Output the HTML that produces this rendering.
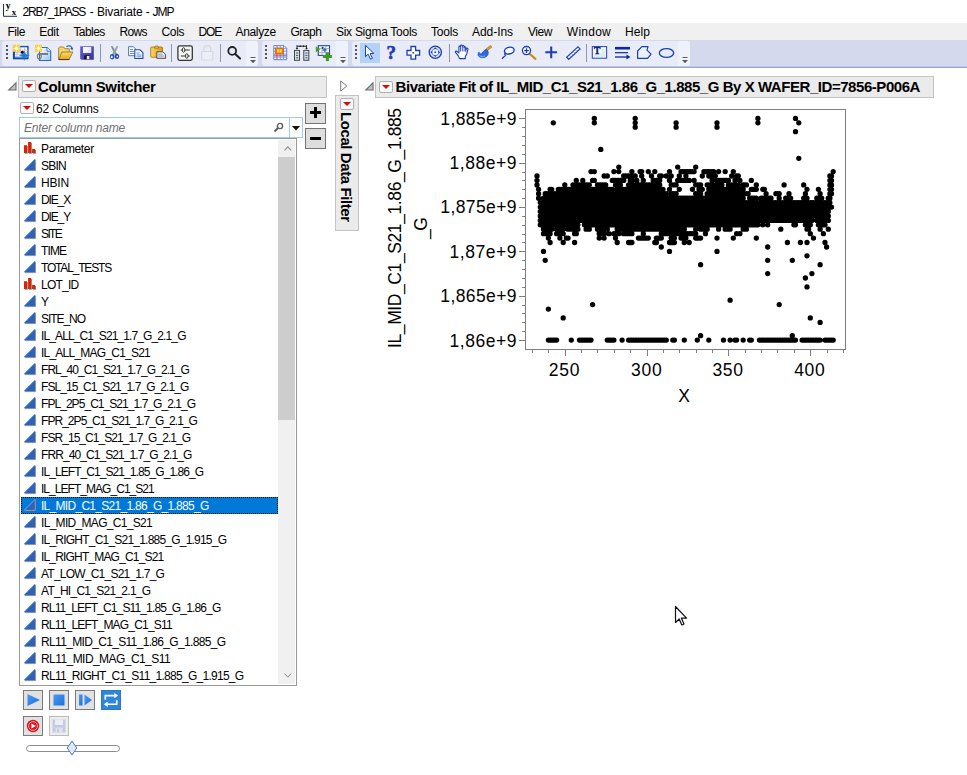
<!DOCTYPE html>
<html><head><meta charset="utf-8"><title>2RB7_1PASS - Bivariate - JMP</title>
<style>
html,body{margin:0;padding:0;background:#fff;}
body{width:967px;height:775px;position:relative;overflow:hidden;font-family:'Liberation Sans',sans-serif;color:#000;}
.t{position:absolute;white-space:pre;line-height:1;transform:translateY(-50%);}
.a{position:absolute;}
svg{position:absolute;overflow:visible;}
.hdr{position:absolute;background:#ebebeb;border:1px solid #c3c3c3;box-sizing:border-box;}
.rt{position:absolute;box-sizing:border-box;width:13.5px;height:12px;border:1px solid #b0b0b0;border-radius:2px;background:#fbfbfb;}
.rt:after{content:"";position:absolute;left:1.7px;top:3.4px;border-left:4px solid transparent;border-right:4px solid transparent;border-top:4.3px solid #d00c0c;}
.btn{position:absolute;box-sizing:border-box;width:21px;height:21px;border:1px solid #747474;background:#dedede;}
.grp{position:absolute;top:41px;height:24.5px;background:#e9ecf7;border-radius:3px;}
.sep{position:absolute;top:44px;width:1px;height:18px;background:#8e94b0;}
.grip i{position:absolute;left:0;width:2px;height:2px;background:#555;}
</style></head><body>

<div class="a" style="left:0;top:0;width:967px;height:23px;background:#fff"></div>
<svg style="left:2px;top:2px" width="16" height="16" viewBox="0 0 16 16"><path d="M1.5 2v12.3H15" fill="none" stroke="#1b2f6b" stroke-width="1"/>
<text x="3.8" y="7.400" font-family="Liberation Serif, serif" font-weight="bold" font-size="9.5" fill="#000">y</text>
<text x="9.800" y="12.800" font-family="Liberation Serif, serif" font-weight="bold" font-size="9" fill="#000">x</text></svg>
<span class="t" style="left:22.6px;top:11.5px;font-size:12px;letter-spacing:-1.190px;">2RB7_1PASS</span>
<span class="t" style="left:89.8px;top:11.5px;font-size:12px;letter-spacing:-0.112px;">- Bivariate -</span>
<span class="t" style="left:152.6px;top:11.5px;font-size:12px;letter-spacing:-1.033px;">JMP</span>
<div class="a" style="left:0;top:23px;width:967px;height:17px;background:#f0f0f0"></div>
<span class="t" style="left:7.5px;top:31.5px;font-size:12px;letter-spacing:-0.486px;">File</span>
<span class="t" style="left:39.2px;top:31.5px;font-size:12px;letter-spacing:-0.297px;">Edit</span>
<span class="t" style="left:73.4px;top:31.5px;font-size:12px;letter-spacing:-0.548px;">Tables</span>
<span class="t" style="left:119.5px;top:31.5px;font-size:12px;letter-spacing:-0.679px;">Rows</span>
<span class="t" style="left:161.4px;top:31.5px;font-size:12px;letter-spacing:-0.279px;">Cols</span>
<span class="t" style="left:198.6px;top:31.5px;font-size:12px;letter-spacing:-1.139px;">DOE</span>
<span class="t" style="left:235.5px;top:31.5px;font-size:12px;letter-spacing:-0.343px;">Analyze</span>
<span class="t" style="left:290.4px;top:31.5px;font-size:12px;letter-spacing:-0.452px;">Graph</span>
<span class="t" style="left:336.0px;top:31.5px;font-size:12px;letter-spacing:-0.277px;">Six Sigma Tools</span>
<span class="t" style="left:431.0px;top:31.5px;font-size:12px;letter-spacing:-0.203px;">Tools</span>
<span class="t" style="left:472.0px;top:31.5px;font-size:12px;letter-spacing:-0.051px;">Add-Ins</span>
<span class="t" style="left:528.0px;top:31.5px;font-size:12px;letter-spacing:-0.449px;">View</span>
<span class="t" style="left:566.8px;top:31.5px;font-size:12px;letter-spacing:0.252px;">Window</span>
<span class="t" style="left:625.0px;top:31.5px;font-size:12px;letter-spacing:0.078px;">Help</span>
<div class="a" style="left:0;top:40px;width:967px;height:28px;background:#d4d9ee;border-bottom:1px solid #9ba7d2;box-sizing:border-box"></div>
<div class="a" style="left:0;top:66px;width:967px;height:1px;background:#c0c8e6"></div>
<div class="grp" style="left:2px;width:256px"></div>
<div class="a" style="left:246px;top:41px;width:12px;height:24.5px;background:#eef2fb;border-radius:0 3px 3px 0"></div>
<svg style="left:249.7px;top:57px" width="6" height="7" viewBox="0 0 6 7"><path d="M0.500 0.500h5" stroke="#5a5a5a" stroke-width="1"/><path d="M0 3.100h6L3 6.200z" fill="#5a5a5a"/><path d="M1 1.500h5M3.500 6.700l3-3.300" stroke="#fff" stroke-width="0.700" fill="none" opacity="0.800"/></svg>
<div class="grp" style="left:262px;width:86px"></div>
<div class="a" style="left:336px;top:41px;width:12px;height:24.5px;background:#eef2fb;border-radius:0 3px 3px 0"></div>
<svg style="left:339.7px;top:57px" width="6" height="7" viewBox="0 0 6 7"><path d="M0.500 0.500h5" stroke="#5a5a5a" stroke-width="1"/><path d="M0 3.100h6L3 6.200z" fill="#5a5a5a"/><path d="M1 1.500h5M3.500 6.700l3-3.300" stroke="#fff" stroke-width="0.700" fill="none" opacity="0.800"/></svg>
<div class="grp" style="left:352px;width:338px"></div>
<div class="a" style="left:678px;top:41px;width:12px;height:24.5px;background:#eef2fb;border-radius:0 3px 3px 0"></div>
<svg style="left:681.7px;top:57px" width="6" height="7" viewBox="0 0 6 7"><path d="M0.500 0.500h5" stroke="#5a5a5a" stroke-width="1"/><path d="M0 3.100h6L3 6.200z" fill="#5a5a5a"/><path d="M1 1.500h5M3.500 6.700l3-3.300" stroke="#fff" stroke-width="0.700" fill="none" opacity="0.800"/></svg>
<div class="a grip" style="left:6px;top:45px"><i style="top:0px"></i><i style="top:4px"></i><i style="top:8px"></i><i style="top:12px"></i></div>
<div class="a grip" style="left:265px;top:45px"><i style="top:0px"></i><i style="top:4px"></i><i style="top:8px"></i><i style="top:12px"></i></div>
<div class="a grip" style="left:355px;top:45px"><i style="top:0px"></i><i style="top:4px"></i><i style="top:8px"></i><i style="top:12px"></i></div>
<div class="sep" style="left:100px"></div>
<div class="sep" style="left:171px"></div>
<div class="sep" style="left:220px"></div>
<div class="sep" style="left:449px"></div>
<div class="sep" style="left:586px"></div>
<svg style="left:0;top:40px" width="700" height="27" viewBox="0 40 700 27">
<defs>
<linearGradient id="gpg" x1="0" y1="0" x2="1" y2="1"><stop offset="0" stop-color="#ffffff"/><stop offset="1" stop-color="#9cc4ee"/></linearGradient>
<linearGradient id="gfo" x1="0" y1="0" x2="0" y2="1"><stop offset="0" stop-color="#fbdc6a"/><stop offset="1" stop-color="#e9a41c"/></linearGradient>
<linearGradient id="gfl" x1="0" y1="0" x2="1" y2="1"><stop offset="0" stop-color="#6a62d6"/><stop offset="1" stop-color="#35309a"/></linearGradient>
<linearGradient id="gcl" x1="0" y1="0" x2="1" y2="0"><stop offset="0" stop-color="#f8d860"/><stop offset="1" stop-color="#e09a10"/></linearGradient>
</defs>
<!-- 1 new data table -->
<rect x="13.6" y="46.6" width="14.3" height="11.8" fill="#fff" stroke="#0d4ea6" stroke-width="1.4"/>
<path d="M13.6 50.2h14.3M13.6 54.3h14.3" stroke="#f0a0aa" stroke-width="0.7"/>
<path d="M17 46.6v11.8M20.700 46.6v11.8M24.4 46.6v11.8M13.6 52.3h14.3M13.6 56.4h14.3" stroke="#8fb0e6" stroke-width="0.7"/>
<path d="M14 47v11.400h14" stroke="#0d4ea6" stroke-width="1.9" fill="none"/>
<g transform="translate(13 44.8)"><rect x="0" y="0" width="7" height="7" fill="#f5c929"/><path d="M3.5 0v7M0 3.5h7M0.8 0.8l5.4 5.4M6.2 0.8L0.8 6.2" stroke="#fff4b8" stroke-width="0.9"/><circle cx="3.5" cy="3.5" r="1.3" fill="#fff"/></g>
<circle cx="22.4" cy="52.3" r="1.5" fill="#000"/>
<path d="M24.300 51c.5 2.5 1.5 3.500 5.100 4.400c-3.600.9-4.600 1.900-5.100 5.100c-.5-3.200-1.500-4.200-4.900-5.100c3.400-.9 4.400-1.900 4.900-4.400z" fill="#1b7ed2" stroke="#1b7ed2" stroke-width="0.35" stroke-linejoin="round"/>
<!-- 2 new script -->
<path d="M39.5 47.500h7.500l3.7 3.700v9.300h-11.200z" fill="url(#gpg)" stroke="#2c6db8" stroke-width="1.1"/>
<path d="M47 47.500v3.700h3.7" fill="#fff" stroke="#2c6db8" stroke-width="0.9"/>
<g transform="translate(35 44.8)"><rect x="0" y="0" width="7" height="7" fill="#f5c929"/><path d="M3.5 0v7M0 3.5h7M0.8 0.8l5.4 5.4M6.2 0.8L0.8 6.2" stroke="#fff4b8" stroke-width="0.9"/><circle cx="3.5" cy="3.5" r="1.3" fill="#fff"/></g>
<path d="M38.5 54h9.5" stroke="#6a6a6a" stroke-width="1.7"/>
<ellipse cx="39.3" cy="56.4" rx="1.9" ry="2.5" fill="none" stroke="#7c7c7c" stroke-width="1.2"/>
<!-- 3 open -->
<path d="M58.6 59.200v-11.300l1-.9h4l1.3 1.700h4.300v10.500z" fill="#f3d772" stroke="#9a7d2c" stroke-width="0.9"/>
<path d="M61.8 52h11l-3.6 7.500h-10.400z" fill="url(#gfo)" stroke="#8a6a1a" stroke-width="0.8"/>
<path d="M58.6 59.600h10.6" stroke="#4a3a12" stroke-width="1"/>
<path d="M66.4 46.800c2-1.7 4.6-1.2 5.5 1.2" fill="none" stroke="#3c6ea8" stroke-width="1.3"/>
<path d="M70.2 48l3-0.3-1 2.800z" fill="#2c5a96"/>
<!-- 4 save -->
<path d="M80.2 46.200h13.600v13.500h-12.400l-1.2-1.200z" fill="url(#gfl)"/>
<rect x="83" y="47" width="8.2" height="6" fill="#f2f4fb"/>
<path d="M91.2 47v6l-5-0z" fill="#d6dcf0" opacity="0.6"/>
<rect x="84" y="55.3" width="6" height="3.9" fill="#1a1a1a"/>
<rect x="86.8" y="56" width="2.6" height="3.2" fill="#e8e8f0"/>
<!-- 5 cut -->
<path d="M110.800 46.200l1.700-.2 4.900 8.800-1.900 1.400z" fill="#858b95"/>
<path d="M118.300 46.200l-1.700-.2-4.900 8.800 1.900 1.400z" fill="#9aa0a9"/>
<ellipse cx="112.200" cy="56.800" rx="2.300" ry="2.700" fill="#2a55c4"/>
<ellipse cx="117" cy="56.400" rx="2.200" ry="2.600" fill="#2347ae"/>
<ellipse cx="111.800" cy="57" rx="0.900" ry="1.200" fill="#fff"/>
<ellipse cx="117.300" cy="56.500" rx="0.800" ry="1.100" fill="#e8eefc"/>
<!-- 6 copy -->
<path d="M128.6 46.700h4.800l2.4 2.400v6.600h-7.200z" fill="#fff" stroke="#3a66b8" stroke-width="0.9"/>
<path d="M130 49.500h3M130 51.500h4M130 53.500h4" stroke="#4a80d8" stroke-width="0.9"/>
<path d="M134.8 49.800h5.200l2.9 2.900v5.800h-8.100z" fill="#fff" stroke="#1d4aa6" stroke-width="1.1"/>
<path d="M136.5 53h3M136.5 55h5M136.5 56.800h5" stroke="#4a80d8" stroke-width="0.9"/>
<!-- 7 paste -->
<rect x="150.7" y="47" width="11.8" height="10.3" rx="1" fill="url(#gcl)" stroke="#9a6c10" stroke-width="0.8"/>
<path d="M154.5 48.200l1-2.300h2.400l1 2.300z" fill="#f0c040" stroke="#8a6a1a" stroke-width="0.7"/>
<path d="M156.8 51.800h6l2.8 2.600v3.900h-8.800z" fill="#dfe6f2" stroke="#4a3a2a" stroke-width="0.9"/>
<path d="M158.3 54.300h3.500M158.3 56h5.5" stroke="#7a8aa8" stroke-width="0.8"/>
<!-- 8 sliders box -->
<rect x="177.9" y="45.9" width="14.4" height="14.4" rx="1.7" fill="#f6f6f6" stroke="#333" stroke-width="1.3"/>
<path d="M180.8 50h9M180.8 56h9" stroke="#333" stroke-width="1.1"/>
<ellipse cx="183.6" cy="50" rx="1.3" ry="2.3" fill="#f6f6f6" stroke="#333" stroke-width="1"/>
<ellipse cx="186.8" cy="56" rx="1.3" ry="2.3" fill="#f6f6f6" stroke="#333" stroke-width="1"/>
<!-- 9 lock disabled -->
<path d="M203.8 51.500v-2.600c0-4.4 7-4.4 7 0v2.6" fill="none" stroke="#d3d7e4" stroke-width="1.3"/>
<rect x="201.7" y="51.5" width="11.2" height="8.5" rx="0.8" fill="#eceff8" stroke="#d3d7e4" stroke-width="1.2"/>
<!-- 10 search -->
<circle cx="232.2" cy="50.9" r="3.9" fill="none" stroke="#222" stroke-width="1.8"/>
<path d="M235 53.800l5 4.8" stroke="#222" stroke-width="2.1" stroke-linecap="round"/>
<!-- 11 table orange -->
<path d="M273.8 45.600h10.200l2.7 2.700v11.400h-12.900z" fill="#fff" stroke="#4a78d8" stroke-width="0.9"/>
<path d="M273.8 48.300h12.900M273.8 51.200h12.900M273.8 54.100h12.900M273.8 57h12.900M280.2 45.600v14.100M283.4 45.600v14.1" stroke="#5a88e0" stroke-width="0.9"/>
<path d="M277 45.600v14.1" stroke="#e03030" stroke-width="0.9"/>
<path d="M273.8 55.600h12.9" stroke="#e03030" stroke-width="0.7"/>
<rect x="275.3" y="48" width="8" height="5.8" fill="#f07c12" stroke="#d05a08" stroke-width="0.6"/>
<rect x="277" y="49.3" width="4.7" height="3.2" fill="#fbe24a"/>
<path d="M279.3 49.300v3.2" stroke="#f07c12" stroke-width="0.7"/>
<!-- 12 columns -->
<rect x="294.5" y="50.4" width="5" height="9.9" fill="#cfe4f6" stroke="#444" stroke-width="1"/>
<rect x="303.8" y="50.4" width="5" height="9.9" fill="#cfe4f6" stroke="#444" stroke-width="1"/>
<path d="M296 53h2.200M296 55.400h2.200M296 57.800h2.200M305.3 53h2.200M305.3 55.400h2.200M305.3 57.800h2.2" stroke="#444" stroke-width="0.9"/>
<path d="M297 46.200h9.500M297 45.200v3.400M306.5 45.200v3.4" stroke="#111" stroke-width="0.9" fill="none"/>
<path d="M295.7 48l1.3 1.4 1.3-1.400zM305.2 48l1.3 1.4 1.3-1.400z" fill="#111"/>
<path d="M299 46.200l1.6-1.100v2.200zM304.5 46.200l-1.6-1.100v2.200z" fill="#111"/>
<!-- 13 table green plus -->
<rect x="318.3" y="45.7" width="11.2" height="9.7" fill="#fff" stroke="#0d4ea6" stroke-width="1.1"/>
<path d="M318.3 48.600h11.200M318.3 52.600h11.2" stroke="#e56a7a" stroke-width="0.7"/>
<path d="M322 45.700v9.700M325.7 45.700v9.7" stroke="#7a9ad8" stroke-width="0.7"/>
<path d="M324.7 47.200c.2 1.7.7 2.2 3.2 2.700c-2.5.5-3 1-3.2 3.200c-.2-2.2-.8-2.7-3.1-3.200c2.3-.5 2.9-1 3.1-2.700z" fill="#1b7ed2"/>
<circle cx="322.7" cy="47.8" r="0.9" fill="#111"/>
<path d="M315.8 46.200l4.5 3.2-4.5 3.200z" fill="#3fa228"/>
<path d="M325.9 52.200h3v2.900h3v3h-3v2.800h-3v-2.800h-3v-3h3z" fill="#3c9a1c"/>
<!-- 14 arrow selected -->
<rect x="360" y="43" width="20" height="20" fill="#b3d2f8"/>
<path d="M365.5 45.300v11.400l2.7-2.5 2.3 5 1.9-.9-2.3-4.800h3.800z" fill="#fff" stroke="#1a44b0" stroke-width="1" stroke-linejoin="round"/>
<!-- 15 ? -->
<text x="386.4" y="58.8" font-family="Liberation Serif, serif" font-weight="bold" font-size="19" fill="#1c3fae" stroke="#1c3fae" stroke-width="0.6">?</text>
<!-- 16 cross -->
<path d="M411 46.500h4.600v4h4v4.600h-4v4h-4.600v-4h-4v-4.600h4z" fill="#fff" stroke="#1c3fae" stroke-width="1.3"/>
<rect x="412.5" y="52" width="1.6" height="1.6" fill="#1c3fae"/>
<!-- 17 target -->
<circle cx="435.3" cy="52.2" r="6.1" fill="#d6e6fa" stroke="#1c3fae" stroke-width="1.3"/>
<circle cx="435.3" cy="52.2" r="3.5" fill="#eef5ff" stroke="#5a7ad0" stroke-width="0.8"/>
<path d="M435.3 47.300l1.5 1.800h-3zM435.3 57.100l1.5-1.800h-3zM430.4 52.200l1.8-1.500v3zM440.2 52.200l-1.8-1.500v3z" fill="#1c3fae"/>
<rect x="434.5" y="51.4" width="1.6" height="1.6" fill="#1c3fae"/>
<!-- 18 hand -->
<path d="M459.5 58.600l-1.3-3-2.7-3.200c-.5-.9.5-1.7 1.4-1.100l2 1.700v-6.200c0-1 1.5-1 1.6 0v-1c0-1.1 1.7-1.1 1.8 0v.5c0-1 1.7-1 1.8 0v1.200c0-1 1.6-1 1.7 0v2.600l.6-1.500c.5-.9 1.9-.5 1.6.6l-1.3 4.8-1.4 2.600v2z" fill="#fff" stroke="#1c3fae" stroke-width="1.1" stroke-linejoin="round"/>
<path d="M460.5 47v4.500M462.3 46v5.500M464.1 46.500v5M465.8 48v4" stroke="#1c3fae" stroke-width="0.8"/>
<!-- 19 brush -->
<path d="M485.5 49.200l5-3.8 1.4 1.7-5 3.900z" fill="#d89a1a" stroke="#8a5a0a" stroke-width="0.5"/>
<path d="M486.5 49.500c2.5 1.5 2.5 5.5-.5 7.300c-2.7 1.6-7 1.1-7.9-1.500c-.4-1.3.1-2.7 1-3.400c-.3 1.8 1.4 2.3 2.7 1.300c1.8-1.3 2.3-3.7 4.7-3.700z" fill="#2a6ae0" stroke="#1a3fa8" stroke-width="0.6"/>
<path d="M479.5 55.500c1.5 1.3 4 1.3 5.5 .3" stroke="#9cc0ff" stroke-width="0.9" fill="none"/>
<!-- 20 lasso -->
<ellipse cx="509.3" cy="50.6" rx="4.9" ry="3.3" transform="rotate(-15 509.3 50.6)" fill="#f4f8ff" stroke="#1c3fae" stroke-width="1.4"/>
<path d="M505.8 53c-1.7.5-1.5 2.2.2 2.200c-1 .5-2 1.5-4 3.6" fill="none" stroke="#1c3fae" stroke-width="1.3"/>
<!-- 21 zoom -->
<path d="M529.8 54l5.6 4.9" stroke="#c88a1a" stroke-width="2.2" stroke-linecap="round"/>
<circle cx="526.5" cy="50.6" r="4.1" fill="#f4f8ff" stroke="#1c3fae" stroke-width="1.3"/>
<path d="M524.2 50.600h4.600M526.5 48.300v4.6" stroke="#1c3fae" stroke-width="1.2"/>
<!-- 22 plus -->
<path d="M545.3 52.300h11.800M551.2 46.400v11.8" stroke="#1c3fb5" stroke-width="2.1"/>
<!-- 23 ruler -->
<path d="M566.7 57.200l11.3-10.3 2 2.1-11.3 10.300z" fill="#fff" stroke="#2448b0" stroke-width="1.25"/>
<path d="M569.7 55.500l.8.900M571.7 53.700l.8.900M573.7 51.900l.8.900M575.7 50.100l.8.9" stroke="#2a52b8" stroke-width="0.6"/>
<!-- 24 text box -->
<rect x="592.3" y="46.6" width="14.3" height="11.6" fill="#fff" stroke="#2a52b8" stroke-width="1.1"/>
<path d="M601.5 50h4M601.5 52h4M594 54h11.500M594 56h11.5" stroke="#b8cdee" stroke-width="0.8"/>
<text x="594" y="54.2" font-family="Liberation Serif, serif" font-weight="bold" font-size="9.5" fill="#0a1f7a" stroke="#0a1f7a" stroke-width="0.4">T</text>
<!-- 25 lines arrow -->
<path d="M615 48.200h15" stroke="#0a2a9a" stroke-width="2.6"/>
<path d="M615 52.700h13" stroke="#0a2a9a" stroke-width="1.2"/>
<path d="M615 57h12" stroke="#0a2a9a" stroke-width="1.3"/>
<path d="M626.5 54.500l4 2.5-4 2.500z" fill="#0a2a9a"/>
<!-- 26 polygon -->
<path d="M637.6 58.300v-7.300l4.3-4.400h6.100l-1 3.5 4 4-3.4 4.200z" fill="#eaf1fc" stroke="#1c3fae" stroke-width="1.2" stroke-linejoin="round"/>
<!-- 27 ellipse -->
<ellipse cx="666.5" cy="53" rx="7.2" ry="4.4" fill="#e2edfb" stroke="#1c3fae" stroke-width="1.3"/>
</svg>

<svg style="left:8px;top:82px" width="9" height="9" viewBox="0 0 9 9"><path d="M8 0.8V8H0.8z" fill="#c4c4c4" stroke="#6a6a6a" stroke-width="1.1"/></svg>
<div class="hdr" style="left:18px;top:76px;width:309px;height:22px"></div>
<div class="rt" style="left:22px;top:80px"></div>
<span class="t" style="left:38.0px;top:86.0px;font-size:15px;font-weight:bold;letter-spacing:-0.334px;">Column Switcher</span>
<div class="rt" style="left:20.3px;top:102px"></div>
<span class="t" style="left:36.0px;top:108.5px;font-size:12px;letter-spacing:-0.153px;">62 Columns</span>
<div class="a" style="left:19px;top:117px;width:284px;height:21px;box-sizing:border-box;border:1px solid #9ccbee;background:#fff"></div>
<div class="a" style="left:289px;top:118px;width:1px;height:19px;background:#9ccbee"></div>
<span class="t" style="left:24.0px;top:127.5px;font-size:12px;font-style:italic;letter-spacing:-0.180px;color:#707070">Enter column name</span>
<svg style="left:273px;top:122px" width="11" height="11" viewBox="0 0 11 11"><circle cx="7" cy="4" r="2.600" fill="none" stroke="#5e5e5e" stroke-width="1.400"/><path d="M5 6L1.500 9.500" stroke="#5e5e5e" stroke-width="1.900"/></svg>
<svg style="left:292px;top:126px" width="8" height="5" viewBox="0 0 8 5"><path d="M0 0h8L4 4.5z" fill="#111"/></svg>
<div class="btn" style="left:305px;top:103px"></div><div class="a" style="left:310px;top:111px;width:11px;height:3px;background:#000"></div><div class="a" style="left:314px;top:107px;width:3px;height:11px;background:#000"></div>
<div class="btn" style="left:305px;top:128px"></div><div class="a" style="left:310px;top:137px;width:11px;height:3px;background:#000"></div>
<div class="a" style="left:19px;top:138px;width:278px;height:548px;box-sizing:border-box;border:1px solid #9a9a9a;background:#fff"></div>
<div class="a" style="left:278px;top:140px;width:17px;height:544px;background:#f0f0f0"></div>
<div class="a" style="left:278px;top:157px;width:17px;height:263px;background:#cdcdcd"></div>
<svg style="left:283.500px;top:146px" width="8" height="5" viewBox="0 0 8 5"><path d="M0.500 4.300L3.800 0.800 7.100 4.300" fill="none" stroke="#8f8f8f" stroke-width="1.150"/></svg>
<svg style="left:283.800px;top:673.300px" width="8" height="5" viewBox="0 0 8 5"><path d="M0.500 0.600L3.800 4.100 7.100 0.600" fill="none" stroke="#858585" stroke-width="1"/></svg>
<svg style="left:24px;top:142px" width="13" height="12" viewBox="0 0 13 12"><path d="M0.800 4h3v7.800h-3zM4.900 1h3v10.800h-3zM8.900 8h3.100v3.800h-3.100z" fill="#8c8c8c"/><path d="M0 3.200h3v7.800h-3zM4.100 0h3v11h-3zM8.100 7h3.100v4h-3.100z" fill="#dc2200"/></svg>
<span class="t" style="left:41.0px;top:148.5px;font-size:12px;letter-spacing:-0.359px;">Parameter</span>
<svg style="left:24px;top:158.9px" width="12" height="12" viewBox="0 0 12 12"><path d="M11.550 0.900v10.700H0.900" stroke="#808080" stroke-width="0.800" fill="none"/><path d="M11.100 0v11.200H0z" fill="#2f62b4"/><path d="M0.300 10.900L10.900 0.300" stroke="#4a8df2" stroke-width="1" fill="none"/></svg>
<span class="t" style="left:41.0px;top:165.5px;font-size:12px;letter-spacing:-0.804px;">SBIN</span>
<svg style="left:24px;top:175.9px" width="12" height="12" viewBox="0 0 12 12"><path d="M11.550 0.900v10.700H0.900" stroke="#808080" stroke-width="0.800" fill="none"/><path d="M11.100 0v11.200H0z" fill="#2f62b4"/><path d="M0.300 10.900L10.900 0.300" stroke="#4a8df2" stroke-width="1" fill="none"/></svg>
<span class="t" style="left:41.0px;top:182.5px;font-size:12px;letter-spacing:-0.193px;">HBIN</span>
<svg style="left:24px;top:192.9px" width="12" height="12" viewBox="0 0 12 12"><path d="M11.550 0.900v10.700H0.900" stroke="#808080" stroke-width="0.800" fill="none"/><path d="M11.100 0v11.200H0z" fill="#2f62b4"/><path d="M0.300 10.900L10.900 0.300" stroke="#4a8df2" stroke-width="1" fill="none"/></svg>
<span class="t" style="left:41.0px;top:199.5px;font-size:12px;letter-spacing:-1.137px;">DIE_X</span>
<svg style="left:24px;top:209.9px" width="12" height="12" viewBox="0 0 12 12"><path d="M11.550 0.900v10.700H0.900" stroke="#808080" stroke-width="0.800" fill="none"/><path d="M11.100 0v11.200H0z" fill="#2f62b4"/><path d="M0.300 10.900L10.900 0.300" stroke="#4a8df2" stroke-width="1" fill="none"/></svg>
<span class="t" style="left:41.0px;top:216.5px;font-size:12px;letter-spacing:-1.137px;">DIE_Y</span>
<svg style="left:24px;top:226.9px" width="12" height="12" viewBox="0 0 12 12"><path d="M11.550 0.900v10.700H0.900" stroke="#808080" stroke-width="0.800" fill="none"/><path d="M11.100 0v11.200H0z" fill="#2f62b4"/><path d="M0.300 10.900L10.900 0.300" stroke="#4a8df2" stroke-width="1" fill="none"/></svg>
<span class="t" style="left:41.0px;top:233.5px;font-size:12px;letter-spacing:-1.618px;">SITE</span>
<svg style="left:24px;top:243.9px" width="12" height="12" viewBox="0 0 12 12"><path d="M11.550 0.900v10.700H0.900" stroke="#808080" stroke-width="0.800" fill="none"/><path d="M11.100 0v11.200H0z" fill="#2f62b4"/><path d="M0.300 10.900L10.900 0.300" stroke="#4a8df2" stroke-width="1" fill="none"/></svg>
<span class="t" style="left:41.0px;top:250.5px;font-size:12px;letter-spacing:-0.868px;">TIME</span>
<svg style="left:24px;top:260.9px" width="12" height="12" viewBox="0 0 12 12"><path d="M11.550 0.900v10.700H0.900" stroke="#808080" stroke-width="0.800" fill="none"/><path d="M11.100 0v11.200H0z" fill="#2f62b4"/><path d="M0.300 10.900L10.900 0.300" stroke="#4a8df2" stroke-width="1" fill="none"/></svg>
<span class="t" style="left:41.0px;top:267.5px;font-size:12px;letter-spacing:-1.175px;">TOTAL_TESTS</span>
<svg style="left:24px;top:278px" width="13" height="12" viewBox="0 0 13 12"><path d="M0.800 4h3v7.800h-3zM4.900 1h3v10.800h-3zM8.900 8h3.100v3.800h-3.100z" fill="#8c8c8c"/><path d="M0 3.200h3v7.800h-3zM4.100 0h3v11h-3zM8.100 7h3.100v4h-3.100z" fill="#dc2200"/></svg>
<span class="t" style="left:41.0px;top:284.5px;font-size:12px;letter-spacing:-0.753px;">LOT_ID</span>
<svg style="left:24px;top:294.9px" width="12" height="12" viewBox="0 0 12 12"><path d="M11.550 0.900v10.700H0.900" stroke="#808080" stroke-width="0.800" fill="none"/><path d="M11.100 0v11.200H0z" fill="#2f62b4"/><path d="M0.300 10.900L10.900 0.300" stroke="#4a8df2" stroke-width="1" fill="none"/></svg>
<span class="t" style="left:41.0px;top:301.5px;font-size:12px;letter-spacing:-2.316px;">Y</span>
<svg style="left:24px;top:311.9px" width="12" height="12" viewBox="0 0 12 12"><path d="M11.550 0.900v10.700H0.900" stroke="#808080" stroke-width="0.800" fill="none"/><path d="M11.100 0v11.200H0z" fill="#2f62b4"/><path d="M0.300 10.900L10.900 0.300" stroke="#4a8df2" stroke-width="1" fill="none"/></svg>
<span class="t" style="left:41.0px;top:318.5px;font-size:12px;letter-spacing:-1.051px;">SITE_NO</span>
<svg style="left:24px;top:328.9px" width="12" height="12" viewBox="0 0 12 12"><path d="M11.550 0.900v10.700H0.900" stroke="#808080" stroke-width="0.800" fill="none"/><path d="M11.100 0v11.200H0z" fill="#2f62b4"/><path d="M0.300 10.900L10.900 0.300" stroke="#4a8df2" stroke-width="1" fill="none"/></svg>
<span class="t" style="left:41.0px;top:335.5px;font-size:12px;letter-spacing:-0.889px;">IL_ALL_C1_S21_1.7_G_2.1_G</span>
<svg style="left:24px;top:345.9px" width="12" height="12" viewBox="0 0 12 12"><path d="M11.550 0.900v10.700H0.900" stroke="#808080" stroke-width="0.800" fill="none"/><path d="M11.100 0v11.200H0z" fill="#2f62b4"/><path d="M0.300 10.900L10.900 0.300" stroke="#4a8df2" stroke-width="1" fill="none"/></svg>
<span class="t" style="left:41.0px;top:352.5px;font-size:12px;letter-spacing:-0.770px;">IL_ALL_MAG_C1_S21</span>
<svg style="left:24px;top:362.9px" width="12" height="12" viewBox="0 0 12 12"><path d="M11.550 0.900v10.700H0.900" stroke="#808080" stroke-width="0.800" fill="none"/><path d="M11.100 0v11.200H0z" fill="#2f62b4"/><path d="M0.300 10.900L10.900 0.300" stroke="#4a8df2" stroke-width="1" fill="none"/></svg>
<span class="t" style="left:41.0px;top:369.5px;font-size:12px;letter-spacing:-0.939px;">FRL_40_C1_S21_1.7_G_2.1_G</span>
<svg style="left:24px;top:379.9px" width="12" height="12" viewBox="0 0 12 12"><path d="M11.550 0.900v10.700H0.900" stroke="#808080" stroke-width="0.800" fill="none"/><path d="M11.100 0v11.200H0z" fill="#2f62b4"/><path d="M0.300 10.900L10.900 0.300" stroke="#4a8df2" stroke-width="1" fill="none"/></svg>
<span class="t" style="left:41.0px;top:386.5px;font-size:12px;letter-spacing:-0.940px;">FSL_15_C1_S21_1.7_G_2.1_G</span>
<svg style="left:24px;top:396.9px" width="12" height="12" viewBox="0 0 12 12"><path d="M11.550 0.900v10.700H0.900" stroke="#808080" stroke-width="0.800" fill="none"/><path d="M11.100 0v11.200H0z" fill="#2f62b4"/><path d="M0.300 10.900L10.900 0.300" stroke="#4a8df2" stroke-width="1" fill="none"/></svg>
<span class="t" style="left:41.0px;top:403.5px;font-size:12px;letter-spacing:-0.947px;">FPL_2P5_C1_S21_1.7_G_2.1_G</span>
<svg style="left:24px;top:413.9px" width="12" height="12" viewBox="0 0 12 12"><path d="M11.550 0.900v10.700H0.900" stroke="#808080" stroke-width="0.800" fill="none"/><path d="M11.100 0v11.200H0z" fill="#2f62b4"/><path d="M0.300 10.900L10.900 0.300" stroke="#4a8df2" stroke-width="1" fill="none"/></svg>
<span class="t" style="left:41.0px;top:420.5px;font-size:12px;letter-spacing:-0.954px;">FPR_2P5_C1_S21_1.7_G_2.1_G</span>
<svg style="left:24px;top:430.9px" width="12" height="12" viewBox="0 0 12 12"><path d="M11.550 0.900v10.700H0.900" stroke="#808080" stroke-width="0.800" fill="none"/><path d="M11.100 0v11.200H0z" fill="#2f62b4"/><path d="M0.300 10.900L10.900 0.300" stroke="#4a8df2" stroke-width="1" fill="none"/></svg>
<span class="t" style="left:41.0px;top:437.5px;font-size:12px;letter-spacing:-0.944px;">FSR_15_C1_S21_1.7_G_2.1_G</span>
<svg style="left:24px;top:447.9px" width="12" height="12" viewBox="0 0 12 12"><path d="M11.550 0.900v10.700H0.900" stroke="#808080" stroke-width="0.800" fill="none"/><path d="M11.100 0v11.200H0z" fill="#2f62b4"/><path d="M0.300 10.900L10.900 0.300" stroke="#4a8df2" stroke-width="1" fill="none"/></svg>
<span class="t" style="left:41.0px;top:454.5px;font-size:12px;letter-spacing:-0.922px;">FRR_40_C1_S21_1.7_G_2.1_G</span>
<svg style="left:24px;top:464.9px" width="12" height="12" viewBox="0 0 12 12"><path d="M11.550 0.900v10.700H0.900" stroke="#808080" stroke-width="0.800" fill="none"/><path d="M11.100 0v11.200H0z" fill="#2f62b4"/><path d="M0.300 10.900L10.900 0.300" stroke="#4a8df2" stroke-width="1" fill="none"/></svg>
<span class="t" style="left:41.0px;top:471.5px;font-size:12px;letter-spacing:-0.926px;">IL_LEFT_C1_S21_1.85_G_1.86_G</span>
<svg style="left:24px;top:481.9px" width="12" height="12" viewBox="0 0 12 12"><path d="M11.550 0.900v10.700H0.900" stroke="#808080" stroke-width="0.800" fill="none"/><path d="M11.100 0v11.200H0z" fill="#2f62b4"/><path d="M0.300 10.900L10.900 0.300" stroke="#4a8df2" stroke-width="1" fill="none"/></svg>
<span class="t" style="left:41.0px;top:488.5px;font-size:12px;letter-spacing:-0.960px;">IL_LEFT_MAG_C1_S21</span>
<div class="a" style="left:21px;top:497px;width:257px;height:17px;box-sizing:border-box;background:#0078d7;border:1px dotted #0a0a14"></div>
<svg style="left:24px;top:498.9px" width="12" height="12" viewBox="0 0 12 12"><path d="M11.100 0.300v10.900H0.300z" fill="#3561b5"/><path d="M0.300 11.200L11.100 0.300" stroke="#6fb0ff" stroke-width="0.900" fill="none"/><path d="M11.300 0.600v10.800H0.600" stroke="#b59a7c" stroke-width="0.900" fill="none"/></svg>
<span class="t" style="left:41.0px;top:505.5px;font-size:12px;letter-spacing:-0.710px;color:#fff">IL_MID_C1_S21_1.86_G_1.885_G</span>
<svg style="left:24px;top:515.9px" width="12" height="12" viewBox="0 0 12 12"><path d="M11.550 0.900v10.700H0.900" stroke="#808080" stroke-width="0.800" fill="none"/><path d="M11.100 0v11.200H0z" fill="#2f62b4"/><path d="M0.300 10.900L10.900 0.300" stroke="#4a8df2" stroke-width="1" fill="none"/></svg>
<span class="t" style="left:41.0px;top:522.5px;font-size:12px;letter-spacing:-0.690px;">IL_MID_MAG_C1_S21</span>
<svg style="left:24px;top:532.9px" width="12" height="12" viewBox="0 0 12 12"><path d="M11.550 0.900v10.700H0.900" stroke="#808080" stroke-width="0.800" fill="none"/><path d="M11.100 0v11.200H0z" fill="#2f62b4"/><path d="M0.300 10.900L10.900 0.300" stroke="#4a8df2" stroke-width="1" fill="none"/></svg>
<span class="t" style="left:41.0px;top:539.5px;font-size:12px;letter-spacing:-0.783px;">IL_RIGHT_C1_S21_1.885_G_1.915_G</span>
<svg style="left:24px;top:549.9px" width="12" height="12" viewBox="0 0 12 12"><path d="M11.550 0.900v10.700H0.900" stroke="#808080" stroke-width="0.800" fill="none"/><path d="M11.100 0v11.200H0z" fill="#2f62b4"/><path d="M0.300 10.900L10.900 0.300" stroke="#4a8df2" stroke-width="1" fill="none"/></svg>
<span class="t" style="left:41.0px;top:556.5px;font-size:12px;letter-spacing:-0.824px;">IL_RIGHT_MAG_C1_S21</span>
<svg style="left:24px;top:566.9px" width="12" height="12" viewBox="0 0 12 12"><path d="M11.550 0.900v10.700H0.900" stroke="#808080" stroke-width="0.800" fill="none"/><path d="M11.100 0v11.200H0z" fill="#2f62b4"/><path d="M0.300 10.900L10.900 0.300" stroke="#4a8df2" stroke-width="1" fill="none"/></svg>
<span class="t" style="left:41.0px;top:573.5px;font-size:12px;letter-spacing:-0.772px;">AT_LOW_C1_S21_1.7_G</span>
<svg style="left:24px;top:583.9px" width="12" height="12" viewBox="0 0 12 12"><path d="M11.550 0.900v10.700H0.900" stroke="#808080" stroke-width="0.800" fill="none"/><path d="M11.100 0v11.200H0z" fill="#2f62b4"/><path d="M0.300 10.900L10.900 0.300" stroke="#4a8df2" stroke-width="1" fill="none"/></svg>
<span class="t" style="left:41.0px;top:590.5px;font-size:12px;letter-spacing:-0.730px;">AT_HI_C1_S21_2.1_G</span>
<svg style="left:24px;top:600.9px" width="12" height="12" viewBox="0 0 12 12"><path d="M11.550 0.900v10.700H0.900" stroke="#808080" stroke-width="0.800" fill="none"/><path d="M11.100 0v11.200H0z" fill="#2f62b4"/><path d="M0.300 10.900L10.900 0.300" stroke="#4a8df2" stroke-width="1" fill="none"/></svg>
<span class="t" style="left:41.0px;top:607.5px;font-size:12px;letter-spacing:-0.854px;">RL11_LEFT_C1_S11_1.85_G_1.86_G</span>
<svg style="left:24px;top:617.9px" width="12" height="12" viewBox="0 0 12 12"><path d="M11.550 0.900v10.700H0.900" stroke="#808080" stroke-width="0.800" fill="none"/><path d="M11.100 0v11.200H0z" fill="#2f62b4"/><path d="M0.300 10.900L10.900 0.300" stroke="#4a8df2" stroke-width="1" fill="none"/></svg>
<span class="t" style="left:41.0px;top:624.5px;font-size:12px;letter-spacing:-0.808px;">RL11_LEFT_MAG_C1_S11</span>
<svg style="left:24px;top:634.9px" width="12" height="12" viewBox="0 0 12 12"><path d="M11.550 0.900v10.700H0.900" stroke="#808080" stroke-width="0.800" fill="none"/><path d="M11.100 0v11.200H0z" fill="#2f62b4"/><path d="M0.300 10.900L10.900 0.300" stroke="#4a8df2" stroke-width="1" fill="none"/></svg>
<span class="t" style="left:41.0px;top:641.5px;font-size:12px;letter-spacing:-0.666px;">RL11_MID_C1_S11_1.86_G_1.885_G</span>
<svg style="left:24px;top:651.9px" width="12" height="12" viewBox="0 0 12 12"><path d="M11.550 0.900v10.700H0.900" stroke="#808080" stroke-width="0.800" fill="none"/><path d="M11.100 0v11.200H0z" fill="#2f62b4"/><path d="M0.300 10.900L10.900 0.300" stroke="#4a8df2" stroke-width="1" fill="none"/></svg>
<span class="t" style="left:41.0px;top:658.5px;font-size:12px;letter-spacing:-0.559px;">RL11_MID_MAG_C1_S11</span>
<svg style="left:24px;top:668.9px" width="12" height="12" viewBox="0 0 12 12"><path d="M11.550 0.900v10.700H0.900" stroke="#808080" stroke-width="0.800" fill="none"/><path d="M11.100 0v11.200H0z" fill="#2f62b4"/><path d="M0.300 10.900L10.900 0.300" stroke="#4a8df2" stroke-width="1" fill="none"/></svg>
<span class="t" style="left:41.0px;top:675.5px;font-size:12px;letter-spacing:-0.727px;">RL11_RIGHT_C1_S11_1.885_G_1.915_G</span>
<svg width="0" height="0" style="left:0;top:0"><defs><linearGradient id="bg1" x1="0" y1="0" x2="1" y2="1"><stop offset="0" stop-color="#4a9af0"/><stop offset="1" stop-color="#1d6fe0"/></linearGradient></defs></svg>
<div class="a" style="left:23px;top:690px;width:20px;height:20px;box-sizing:border-box;border:1px solid #7a7a7a;background:#e1e1e1"></div>
<svg style="left:23px;top:690px" width="20" height="20" viewBox="0 0 20 20"><path d="M4.5 4L17 10 4.5 16z" fill="url(#bg1)"/></svg>
<div class="a" style="left:49px;top:690px;width:20px;height:20px;box-sizing:border-box;border:1px solid #7a7a7a;background:#e1e1e1"></div>
<svg style="left:49px;top:690px" width="20" height="20" viewBox="0 0 20 20"><rect x="4.5" y="4.5" width="11" height="11" fill="url(#bg1)"/></svg>
<div class="a" style="left:75px;top:690px;width:20px;height:20px;box-sizing:border-box;border:1px solid #7a7a7a;background:#e1e1e1"></div>
<svg style="left:75px;top:690px" width="20" height="20" viewBox="0 0 20 20"><rect x="4" y="4.5" width="3.5" height="11" fill="url(#bg1)"/><path d="M9.5 4.5L17 10 9.5 15.5z" fill="url(#bg1)"/></svg>
<div class="a" style="left:101px;top:690px;width:20px;height:20px;box-sizing:border-box;border:1px solid #2a78c8;background:#2f86d9"></div>
<svg style="left:101px;top:690px" width="20" height="20" viewBox="0 0 20 20"><path d="M4.300 9.800V5.600h9.500M15.700 10.200v4.100h-9.500" fill="none" stroke="#fff" stroke-width="1.600"/><path d="M13.300 2.900l3.800 2.700-3.800 2.700zM6.700 11.600l-3.800 2.700 3.800 2.700z" fill="#fff"/></svg>
<div class="a" style="left:23px;top:716px;width:20px;height:20px;box-sizing:border-box;border:1px solid #7a7a7a;background:#e1e1e1"></div>
<svg style="left:23px;top:716px" width="20" height="20" viewBox="0 0 20 20"><circle cx="10" cy="10" r="6.200" fill="#dc1420"/><circle cx="10" cy="10" r="4.400" fill="none" stroke="#fff" stroke-width="0.650" opacity="0.900"/><path d="M8.500 7.400L12.800 10 8.500 12.600z" fill="#fff"/></svg>
<div class="a" style="left:49px;top:716px;width:20px;height:20px;box-sizing:border-box;border:1px solid #bcbcbc;background:#ededed"></div>
<svg style="left:49px;top:716px" width="20" height="20" viewBox="0 0 20 20"><path d="M3.5 3.5h13v13h-13z" fill="#c4cbe0"/><rect x="6" y="3.5" width="8" height="5.5" fill="#eceef4"/><rect x="6.5" y="11.5" width="7" height="5" fill="#dfe3ee"/><rect x="8" y="12.5" width="2" height="4" fill="#c4cbe0"/></svg>
<div class="a" style="left:26px;top:745px;width:94px;height:7px;box-sizing:border-box;border:1px solid #8c8c8c;border-radius:3.5px;background:#fff"></div>
<svg style="left:66px;top:740px" width="12" height="16" viewBox="0 0 12 16"><path d="M6 1L10.8 8 6 15 1.2 8z" fill="#dce9f8" stroke="#4a7ab8" stroke-width="1"/></svg>
<svg style="left:340px;top:80px" width="8" height="12" viewBox="0 0 8 12"><path d="M0.7 0.9L6.8 6 0.7 11.1z" fill="#fff" stroke="#7a7a7a" stroke-width="1"/></svg>
<div class="hdr" style="left:335px;top:95px;width:24px;height:136px"></div>
<div class="rt" style="left:340px;top:98px"></div>
<span class="a" style="left:345.800px;top:112.300px;white-space:pre;line-height:1;font-size:15px;font-weight:bold;letter-spacing:-0.412px;transform-origin:0 0;transform:rotate(90deg) translateY(-50%)">Local Data Filter</span>
<svg style="left:365px;top:82px" width="9" height="9" viewBox="0 0 9 9"><path d="M8 0.8V8H0.8z" fill="#c4c4c4" stroke="#6a6a6a" stroke-width="1.1"/></svg>
<div class="hdr" style="left:375px;top:76px;width:559px;height:22px"></div>
<div class="rt" style="left:379px;top:81px"></div>
<span class="t" style="left:395.6px;top:86.0px;font-size:15px;font-weight:bold;letter-spacing:-0.447px;">Bivariate Fit of IL_MID_C1_S21_1.86_G_1.885_G By X WAFER_ID=7856-P006A</span>
<span class="t" style="left:440.3px;top:119.8px;font-size:17.5px;letter-spacing:0.389px;">1,885e+9</span>
<span class="t" style="left:449.6px;top:164.1px;font-size:17.5px;letter-spacing:0.507px;">1,88e+9</span>
<span class="t" style="left:440.3px;top:208.4px;font-size:17.5px;letter-spacing:0.389px;">1,875e+9</span>
<span class="t" style="left:449.6px;top:252.8px;font-size:17.5px;letter-spacing:0.507px;">1,87e+9</span>
<span class="t" style="left:440.3px;top:297.2px;font-size:17.5px;letter-spacing:0.389px;">1,865e+9</span>
<span class="t" style="left:449.6px;top:341.5px;font-size:17.5px;letter-spacing:0.507px;">1,86e+9</span>
<span class="t" style="left:548.8px;top:371.2px;font-size:17.5px;letter-spacing:0.699px;">250</span>
<span class="t" style="left:631.1px;top:371.2px;font-size:17.5px;letter-spacing:0.699px;">300</span>
<span class="t" style="left:712.4px;top:371.2px;font-size:17.5px;letter-spacing:0.699px;">350</span>
<span class="t" style="left:794.2px;top:371.2px;font-size:17.5px;letter-spacing:0.699px;">400</span>
<span class="t" style="left:678.2px;top:397.4px;font-size:17.5px;letter-spacing:-1.188px;">X</span>
<span class="a" style="left:395.65px;top:348.2px;white-space:pre;line-height:1;font-size:17.5px;letter-spacing:-0.398px;transform-origin:0 0;transform:rotate(-90deg) translateY(-50%)">IL_MID_C1_S21_1.86_G_1.885</span>
<span class="a" style="left:421.75px;top:238.5px;white-space:pre;line-height:1;font-size:17.5px;letter-spacing:-1.430px;transform-origin:0 0;transform:rotate(-90deg) translateY(-50%)">_G</span>
<svg style="left:0;top:0" width="967" height="775" viewBox="0 0 967 775">
<rect x="525.5" y="109.5" width="320" height="240" fill="#fff" stroke="#7f7f7f" stroke-width="1"/>
<path d="M519 340.5H525M522 331.5H525M522 322.5H525M522 313.5H525M522 305.5H525M519 296.5H525M522 287.5H525M522 278.5H525M522 269.5H525M522 260.5H525M519 251.5H525M522 242.5H525M522 234.5H525M522 225.5H525M522 216.5H525M519 207.5H525M522 198.5H525M522 189.5H525M522 180.5H525M522 172.5H525M519 163.5H525M522 154.5H525M522 145.5H525M522 136.5H525M522 127.5H525M519 118.5H525M532.5 350V353M548.5 350V353M565.5 350V356M581.5 350V353M597.5 350V353M614.5 350V353M630.5 350V353M647.5 350V356M663.5 350V353M679.5 350V353M696.5 350V353M712.5 350V353M728.5 350V356M745.5 350V353M761.5 350V353M777.5 350V353M794.5 350V353M810.5 350V356M827.5 350V353M843.5 350V353" stroke="#7f7f7f" stroke-width="1" fill="none"/>
<path d="M537.0 184.9h0M537.0 180.4h0M537.0 176.0h0M538.6 198.2h0M538.6 193.7h0M538.6 189.3h0M540.3 224.8h0M540.3 220.4h0M540.3 215.9h0M540.3 211.5h0M540.3 207.1h0M540.3 202.6h0M541.9 224.8h0M541.9 220.4h0M541.9 215.9h0M541.9 211.5h0M541.9 207.1h0M541.9 202.6h0M543.5 251.4h0M543.5 233.7h0M543.5 229.2h0M543.5 224.8h0M543.5 220.4h0M543.5 215.9h0M543.5 211.5h0M543.5 207.1h0M543.5 202.6h0M543.5 198.2h0M545.2 260.3h0M545.2 233.7h0M545.2 229.2h0M545.2 224.8h0M545.2 220.4h0M545.2 215.9h0M545.2 211.5h0M545.2 207.1h0M545.2 202.6h0M545.2 198.2h0M545.2 193.7h0M546.8 233.7h0M546.8 229.2h0M546.8 224.8h0M546.8 220.4h0M546.8 215.9h0M546.8 211.5h0M546.8 207.1h0M546.8 202.6h0M546.8 198.2h0M546.8 193.7h0M548.4 340.1h0M548.4 309.1h0M548.4 238.1h0M548.4 233.7h0M548.4 229.2h0M548.4 224.8h0M548.4 220.4h0M548.4 215.9h0M548.4 211.5h0M548.4 207.1h0M548.4 202.6h0M548.4 198.2h0M548.4 193.7h0M550.1 340.1h0M550.1 242.5h0M550.1 233.7h0M550.1 229.2h0M550.1 224.8h0M550.1 220.4h0M550.1 215.9h0M550.1 211.5h0M550.1 207.1h0M550.1 202.6h0M550.1 198.2h0M550.1 193.7h0M550.1 189.3h0M551.7 340.1h0M551.7 229.2h0M551.7 224.8h0M551.7 220.4h0M551.7 215.9h0M551.7 211.5h0M551.7 207.1h0M551.7 202.6h0M551.7 198.2h0M551.7 193.7h0M551.7 189.3h0M553.3 340.1h0M553.3 224.8h0M553.3 220.4h0M553.3 215.9h0M553.3 211.5h0M553.3 207.1h0M553.3 202.6h0M553.3 198.2h0M553.3 193.7h0M553.3 122.8h0M555.0 340.1h0M555.0 224.8h0M555.0 220.4h0M555.0 215.9h0M555.0 211.5h0M555.0 207.1h0M555.0 202.6h0M555.0 198.2h0M555.0 193.7h0M556.6 340.1h0M556.6 233.7h0M556.6 229.2h0M556.6 224.8h0M556.6 220.4h0M556.6 215.9h0M556.6 211.5h0M556.6 207.1h0M556.6 202.6h0M556.6 198.2h0M556.6 193.7h0M558.3 233.7h0M558.3 229.2h0M558.3 224.8h0M558.3 220.4h0M558.3 215.9h0M558.3 211.5h0M558.3 207.1h0M558.3 202.6h0M558.3 198.2h0M558.3 193.7h0M558.3 189.3h0M559.9 238.1h0M559.9 233.7h0M559.9 229.2h0M559.9 224.8h0M559.9 220.4h0M559.9 215.9h0M559.9 211.5h0M559.9 207.1h0M559.9 202.6h0M559.9 198.2h0M559.9 193.7h0M559.9 189.3h0M561.5 233.7h0M561.5 229.2h0M561.5 224.8h0M561.5 220.4h0M561.5 215.9h0M561.5 211.5h0M561.5 207.1h0M561.5 202.6h0M561.5 198.2h0M561.5 193.7h0M561.5 189.3h0M563.2 317.9h0M563.2 242.5h0M563.2 233.7h0M563.2 229.2h0M563.2 224.8h0M563.2 220.4h0M563.2 215.9h0M563.2 211.5h0M563.2 207.1h0M563.2 202.6h0M563.2 198.2h0M563.2 193.7h0M563.2 189.3h0M564.8 224.8h0M564.8 220.4h0M564.8 215.9h0M564.8 211.5h0M564.8 207.1h0M564.8 202.6h0M564.8 198.2h0M564.8 193.7h0M564.8 189.3h0M564.8 184.9h0M566.4 238.1h0M566.4 224.8h0M566.4 220.4h0M566.4 215.9h0M566.4 211.5h0M566.4 207.1h0M566.4 202.6h0M566.4 198.2h0M566.4 193.7h0M566.4 189.3h0M568.1 238.1h0M568.1 229.2h0M568.1 224.8h0M568.1 220.4h0M568.1 215.9h0M568.1 211.5h0M568.1 207.1h0M568.1 202.6h0M568.1 198.2h0M568.1 193.7h0M568.1 189.3h0M569.7 229.2h0M569.7 224.8h0M569.7 220.4h0M569.7 215.9h0M569.7 211.5h0M569.7 207.1h0M569.7 202.6h0M569.7 198.2h0M569.7 193.7h0M569.7 189.3h0M571.3 340.1h0M571.3 229.2h0M571.3 224.8h0M571.3 220.4h0M571.3 215.9h0M571.3 211.5h0M571.3 207.1h0M571.3 202.6h0M571.3 198.2h0M571.3 193.7h0M571.3 189.3h0M573.0 229.2h0M573.0 224.8h0M573.0 220.4h0M573.0 215.9h0M573.0 211.5h0M573.0 207.1h0M573.0 202.6h0M573.0 198.2h0M573.0 193.7h0M573.0 189.3h0M573.0 184.9h0M574.6 242.5h0M574.6 233.7h0M574.6 229.2h0M574.6 224.8h0M574.6 220.4h0M574.6 215.9h0M574.6 211.5h0M574.6 207.1h0M574.6 202.6h0M574.6 198.2h0M574.6 193.7h0M574.6 189.3h0M574.6 184.9h0M576.3 233.7h0M576.3 229.2h0M576.3 224.8h0M576.3 220.4h0M576.3 215.9h0M576.3 211.5h0M576.3 207.1h0M576.3 202.6h0M576.3 198.2h0M576.3 193.7h0M576.3 189.3h0M576.3 184.9h0M576.3 180.4h0M577.9 229.2h0M577.9 224.8h0M577.9 220.4h0M577.9 215.9h0M577.9 211.5h0M577.9 207.1h0M577.9 202.6h0M577.9 198.2h0M577.9 193.7h0M577.9 189.3h0M577.9 184.9h0M579.5 340.1h0M579.5 220.4h0M579.5 215.9h0M579.5 211.5h0M579.5 207.1h0M579.5 202.6h0M579.5 198.2h0M579.5 193.7h0M579.5 189.3h0M579.5 184.9h0M581.2 340.1h0M581.2 220.4h0M581.2 215.9h0M581.2 211.5h0M581.2 207.1h0M581.2 202.6h0M581.2 198.2h0M581.2 193.7h0M581.2 189.3h0M581.2 184.9h0M582.8 340.1h0M582.8 220.4h0M582.8 215.9h0M582.8 211.5h0M582.8 207.1h0M582.8 202.6h0M582.8 198.2h0M582.8 193.7h0M582.8 189.3h0M582.8 184.9h0M582.8 180.4h0M584.4 340.1h0M584.4 224.8h0M584.4 220.4h0M584.4 215.9h0M584.4 211.5h0M584.4 207.1h0M584.4 202.6h0M584.4 198.2h0M584.4 193.7h0M584.4 189.3h0M584.4 184.9h0M586.1 340.1h0M586.1 229.2h0M586.1 224.8h0M586.1 220.4h0M586.1 215.9h0M586.1 211.5h0M586.1 207.1h0M586.1 202.6h0M586.1 198.2h0M586.1 193.7h0M586.1 189.3h0M586.1 184.9h0M587.7 340.1h0M587.7 229.2h0M587.7 224.8h0M587.7 220.4h0M587.7 215.9h0M587.7 211.5h0M587.7 207.1h0M587.7 202.6h0M587.7 198.2h0M587.7 193.7h0M587.7 189.3h0M587.7 184.9h0M589.3 340.1h0M589.3 229.2h0M589.3 224.8h0M589.3 220.4h0M589.3 215.9h0M589.3 211.5h0M589.3 207.1h0M589.3 202.6h0M589.3 198.2h0M589.3 193.7h0M589.3 189.3h0M589.3 184.9h0M591.0 340.1h0M591.0 224.8h0M591.0 220.4h0M591.0 215.9h0M591.0 211.5h0M591.0 207.1h0M591.0 202.6h0M591.0 198.2h0M591.0 193.7h0M591.0 189.3h0M591.0 171.6h0M592.6 304.6h0M592.6 224.8h0M592.6 220.4h0M592.6 215.9h0M592.6 211.5h0M592.6 207.1h0M592.6 202.6h0M592.6 198.2h0M592.6 193.7h0M592.6 189.3h0M592.6 180.4h0M594.3 224.8h0M594.3 220.4h0M594.3 215.9h0M594.3 211.5h0M594.3 207.1h0M594.3 202.6h0M594.3 198.2h0M594.3 193.7h0M594.3 189.3h0M594.3 180.4h0M594.3 171.6h0M594.3 122.8h0M594.3 118.4h0M595.9 224.8h0M595.9 220.4h0M595.9 215.9h0M595.9 211.5h0M595.9 207.1h0M595.9 202.6h0M595.9 198.2h0M595.9 193.7h0M595.9 189.3h0M597.5 229.2h0M597.5 224.8h0M597.5 220.4h0M597.5 215.9h0M597.5 211.5h0M597.5 207.1h0M597.5 202.6h0M597.5 198.2h0M597.5 193.7h0M597.5 189.3h0M597.5 184.9h0M599.2 238.1h0M599.2 233.7h0M599.2 229.2h0M599.2 224.8h0M599.2 220.4h0M599.2 215.9h0M599.2 211.5h0M599.2 207.1h0M599.2 202.6h0M599.2 198.2h0M599.2 193.7h0M599.2 189.3h0M599.2 184.9h0M600.8 233.7h0M600.8 229.2h0M600.8 224.8h0M600.8 220.4h0M600.8 215.9h0M600.8 211.5h0M600.8 207.1h0M600.8 202.6h0M600.8 198.2h0M600.8 193.7h0M600.8 189.3h0M600.8 184.9h0M600.8 149.4h0M602.4 233.7h0M602.4 229.2h0M602.4 224.8h0M602.4 220.4h0M602.4 215.9h0M602.4 211.5h0M602.4 207.1h0M602.4 202.6h0M602.4 198.2h0M602.4 193.7h0M602.4 189.3h0M602.4 184.9h0M604.1 238.1h0M604.1 233.7h0M604.1 229.2h0M604.1 224.8h0M604.1 220.4h0M604.1 215.9h0M604.1 211.5h0M604.1 207.1h0M604.1 202.6h0M604.1 198.2h0M604.1 193.7h0M604.1 189.3h0M604.1 184.9h0M604.1 176.0h0M605.7 229.2h0M605.7 224.8h0M605.7 220.4h0M605.7 215.9h0M605.7 211.5h0M605.7 207.1h0M605.7 202.6h0M605.7 198.2h0M605.7 193.7h0M605.7 189.3h0M605.7 184.9h0M607.3 340.1h0M607.3 229.2h0M607.3 224.8h0M607.3 220.4h0M607.3 215.9h0M607.3 211.5h0M607.3 207.1h0M607.3 202.6h0M607.3 198.2h0M607.3 193.7h0M607.3 189.3h0M607.3 176.0h0M609.0 340.1h0M609.0 233.7h0M609.0 224.8h0M609.0 220.4h0M609.0 215.9h0M609.0 211.5h0M609.0 207.1h0M609.0 202.6h0M609.0 198.2h0M609.0 193.7h0M609.0 189.3h0M610.6 340.1h0M610.6 224.8h0M610.6 220.4h0M610.6 215.9h0M610.6 211.5h0M610.6 207.1h0M610.6 202.6h0M610.6 198.2h0M610.6 193.7h0M610.6 189.3h0M612.3 340.1h0M612.3 224.8h0M612.3 220.4h0M612.3 215.9h0M612.3 211.5h0M612.3 207.1h0M612.3 202.6h0M612.3 198.2h0M612.3 193.7h0M612.3 189.3h0M612.3 180.4h0M613.9 340.1h0M613.9 233.7h0M613.9 224.8h0M613.9 220.4h0M613.9 215.9h0M613.9 211.5h0M613.9 207.1h0M613.9 202.6h0M613.9 198.2h0M613.9 193.7h0M613.9 180.4h0M613.9 171.6h0M615.5 238.1h0M615.5 233.7h0M615.5 224.8h0M615.5 220.4h0M615.5 215.9h0M615.5 211.5h0M615.5 207.1h0M615.5 202.6h0M615.5 198.2h0M615.5 193.7h0M615.5 184.9h0M615.5 180.4h0M617.2 242.5h0M617.2 233.7h0M617.2 229.2h0M617.2 224.8h0M617.2 220.4h0M617.2 215.9h0M617.2 211.5h0M617.2 207.1h0M617.2 202.6h0M617.2 198.2h0M617.2 193.7h0M617.2 189.3h0M617.2 184.9h0M617.2 180.4h0M618.8 233.7h0M618.8 229.2h0M618.8 224.8h0M618.8 220.4h0M618.8 215.9h0M618.8 211.5h0M618.8 207.1h0M618.8 202.6h0M618.8 198.2h0M618.8 193.7h0M618.8 189.3h0M618.8 184.9h0M618.8 180.4h0M618.8 171.6h0M618.8 167.1h0M620.4 229.2h0M620.4 224.8h0M620.4 220.4h0M620.4 215.9h0M620.4 211.5h0M620.4 207.1h0M620.4 202.6h0M620.4 198.2h0M620.4 193.7h0M620.4 189.3h0M620.4 184.9h0M620.4 180.4h0M622.1 340.1h0M622.1 229.2h0M622.1 224.8h0M622.1 220.4h0M622.1 215.9h0M622.1 211.5h0M622.1 207.1h0M622.1 202.6h0M622.1 198.2h0M622.1 193.7h0M622.1 189.3h0M623.7 233.7h0M623.7 229.2h0M623.7 224.8h0M623.7 220.4h0M623.7 215.9h0M623.7 211.5h0M623.7 207.1h0M623.7 202.6h0M623.7 198.2h0M623.7 193.7h0M623.7 189.3h0M623.7 180.4h0M623.7 176.0h0M625.3 233.7h0M625.3 229.2h0M625.3 224.8h0M625.3 220.4h0M625.3 215.9h0M625.3 211.5h0M625.3 207.1h0M625.3 202.6h0M625.3 198.2h0M625.3 193.7h0M625.3 189.3h0M625.3 176.0h0M627.0 233.7h0M627.0 229.2h0M627.0 224.8h0M627.0 220.4h0M627.0 215.9h0M627.0 211.5h0M627.0 207.1h0M627.0 202.6h0M627.0 198.2h0M627.0 193.7h0M627.0 189.3h0M627.0 176.0h0M628.6 340.1h0M628.6 242.5h0M628.6 233.7h0M628.6 229.2h0M628.6 224.8h0M628.6 220.4h0M628.6 215.9h0M628.6 211.5h0M628.6 207.1h0M628.6 202.6h0M628.6 198.2h0M628.6 193.7h0M628.6 189.3h0M628.6 184.9h0M628.6 176.0h0M630.3 340.1h0M630.3 242.5h0M630.3 233.7h0M630.3 229.2h0M630.3 224.8h0M630.3 220.4h0M630.3 215.9h0M630.3 211.5h0M630.3 207.1h0M630.3 202.6h0M630.3 198.2h0M630.3 193.7h0M630.3 189.3h0M630.3 184.9h0M630.3 180.4h0M630.3 176.0h0M631.9 340.1h0M631.9 242.5h0M631.9 233.7h0M631.9 229.2h0M631.9 224.8h0M631.9 220.4h0M631.9 215.9h0M631.9 211.5h0M631.9 207.1h0M631.9 202.6h0M631.9 198.2h0M631.9 193.7h0M631.9 189.3h0M631.9 184.9h0M631.9 180.4h0M631.9 176.0h0M631.9 171.6h0M633.5 340.1h0M633.5 229.2h0M633.5 224.8h0M633.5 220.4h0M633.5 215.9h0M633.5 211.5h0M633.5 207.1h0M633.5 202.6h0M633.5 198.2h0M633.5 193.7h0M633.5 189.3h0M633.5 184.9h0M635.2 340.1h0M635.2 229.2h0M635.2 224.8h0M635.2 220.4h0M635.2 215.9h0M635.2 211.5h0M635.2 207.1h0M635.2 202.6h0M635.2 198.2h0M635.2 193.7h0M635.2 189.3h0M635.2 184.9h0M635.2 176.0h0M635.2 127.2h0M635.2 122.8h0M635.2 118.4h0M636.8 340.1h0M636.8 229.2h0M636.8 224.8h0M636.8 220.4h0M636.8 215.9h0M636.8 211.5h0M636.8 207.1h0M636.8 202.6h0M636.8 198.2h0M636.8 193.7h0M636.8 189.3h0M636.8 184.9h0M636.8 180.4h0M638.4 340.1h0M638.4 238.1h0M638.4 229.2h0M638.4 224.8h0M638.4 220.4h0M638.4 215.9h0M638.4 211.5h0M638.4 207.1h0M638.4 202.6h0M638.4 198.2h0M638.4 193.7h0M638.4 189.3h0M638.4 184.9h0M640.1 340.1h0M640.1 238.1h0M640.1 229.2h0M640.1 224.8h0M640.1 220.4h0M640.1 215.9h0M640.1 211.5h0M640.1 207.1h0M640.1 202.6h0M640.1 198.2h0M640.1 193.7h0M640.1 189.3h0M640.1 184.9h0M640.1 171.6h0M641.7 340.1h0M641.7 238.1h0M641.7 229.2h0M641.7 224.8h0M641.7 220.4h0M641.7 215.9h0M641.7 211.5h0M641.7 207.1h0M641.7 202.6h0M641.7 198.2h0M641.7 193.7h0M641.7 189.3h0M641.7 184.9h0M641.7 176.0h0M641.7 171.6h0M643.3 340.1h0M643.3 238.1h0M643.3 233.7h0M643.3 229.2h0M643.3 224.8h0M643.3 220.4h0M643.3 215.9h0M643.3 211.5h0M643.3 207.1h0M643.3 202.6h0M643.3 198.2h0M643.3 193.7h0M643.3 189.3h0M643.3 184.9h0M643.3 180.4h0M645.0 340.1h0M645.0 238.1h0M645.0 229.2h0M645.0 224.8h0M645.0 220.4h0M645.0 215.9h0M645.0 211.5h0M645.0 207.1h0M645.0 202.6h0M645.0 198.2h0M645.0 193.7h0M645.0 189.3h0M645.0 184.9h0M646.6 340.1h0M646.6 238.1h0M646.6 229.2h0M646.6 224.8h0M646.6 220.4h0M646.6 215.9h0M646.6 211.5h0M646.6 207.1h0M646.6 202.6h0M646.6 198.2h0M646.6 193.7h0M646.6 189.3h0M646.6 184.9h0M648.3 340.1h0M648.3 238.1h0M648.3 229.2h0M648.3 224.8h0M648.3 220.4h0M648.3 215.9h0M648.3 211.5h0M648.3 207.1h0M648.3 202.6h0M648.3 198.2h0M648.3 193.7h0M648.3 189.3h0M648.3 184.9h0M648.3 171.6h0M649.9 340.1h0M649.9 229.2h0M649.9 224.8h0M649.9 220.4h0M649.9 215.9h0M649.9 211.5h0M649.9 207.1h0M649.9 202.6h0M649.9 198.2h0M649.9 193.7h0M649.9 189.3h0M649.9 184.9h0M651.5 340.1h0M651.5 229.2h0M651.5 224.8h0M651.5 220.4h0M651.5 215.9h0M651.5 211.5h0M651.5 207.1h0M651.5 202.6h0M651.5 198.2h0M651.5 193.7h0M651.5 189.3h0M651.5 184.9h0M651.5 176.0h0M653.2 340.1h0M653.2 229.2h0M653.2 224.8h0M653.2 220.4h0M653.2 215.9h0M653.2 211.5h0M653.2 207.1h0M653.2 202.6h0M653.2 198.2h0M653.2 193.7h0M653.2 189.3h0M653.2 184.9h0M653.2 180.4h0M654.8 340.1h0M654.8 242.5h0M654.8 229.2h0M654.8 224.8h0M654.8 220.4h0M654.8 215.9h0M654.8 211.5h0M654.8 207.1h0M654.8 202.6h0M654.8 198.2h0M654.8 193.7h0M654.8 189.3h0M654.8 184.9h0M654.8 180.4h0M654.8 171.6h0M656.4 340.1h0M656.4 242.5h0M656.4 238.1h0M656.4 229.2h0M656.4 224.8h0M656.4 220.4h0M656.4 215.9h0M656.4 211.5h0M656.4 207.1h0M656.4 202.6h0M656.4 198.2h0M656.4 193.7h0M656.4 189.3h0M656.4 184.9h0M656.4 180.4h0M658.1 340.1h0M658.1 238.1h0M658.1 229.2h0M658.1 224.8h0M658.1 220.4h0M658.1 215.9h0M658.1 211.5h0M658.1 207.1h0M658.1 202.6h0M658.1 198.2h0M658.1 193.7h0M658.1 189.3h0M658.1 184.9h0M658.1 180.4h0M659.7 340.1h0M659.7 238.1h0M659.7 229.2h0M659.7 224.8h0M659.7 220.4h0M659.7 215.9h0M659.7 211.5h0M659.7 207.1h0M659.7 202.6h0M659.7 198.2h0M659.7 193.7h0M659.7 189.3h0M659.7 184.9h0M659.7 180.4h0M659.7 176.0h0M661.3 340.1h0M661.3 247.0h0M661.3 238.1h0M661.3 233.7h0M661.3 229.2h0M661.3 224.8h0M661.3 220.4h0M661.3 215.9h0M661.3 211.5h0M661.3 207.1h0M661.3 202.6h0M661.3 198.2h0M661.3 193.7h0M661.3 189.3h0M661.3 176.0h0M663.0 340.1h0M663.0 233.7h0M663.0 229.2h0M663.0 224.8h0M663.0 220.4h0M663.0 215.9h0M663.0 211.5h0M663.0 207.1h0M663.0 202.6h0M663.0 198.2h0M663.0 193.7h0M663.0 189.3h0M664.6 340.1h0M664.6 233.7h0M664.6 229.2h0M664.6 224.8h0M664.6 220.4h0M664.6 215.9h0M664.6 211.5h0M664.6 207.1h0M664.6 202.6h0M664.6 198.2h0M664.6 193.7h0M666.3 340.1h0M666.3 233.7h0M666.3 229.2h0M666.3 224.8h0M666.3 220.4h0M666.3 215.9h0M666.3 211.5h0M666.3 207.1h0M666.3 202.6h0M666.3 198.2h0M666.3 193.7h0M666.3 176.0h0M667.9 233.7h0M667.9 229.2h0M667.9 224.8h0M667.9 220.4h0M667.9 215.9h0M667.9 211.5h0M667.9 207.1h0M667.9 202.6h0M667.9 198.2h0M669.5 251.4h0M669.5 242.5h0M669.5 233.7h0M669.5 229.2h0M669.5 224.8h0M669.5 220.4h0M669.5 215.9h0M669.5 211.5h0M669.5 207.1h0M669.5 202.6h0M669.5 198.2h0M669.5 189.3h0M669.5 180.4h0M669.5 171.6h0M671.2 242.5h0M671.2 238.1h0M671.2 233.7h0M671.2 229.2h0M671.2 224.8h0M671.2 220.4h0M671.2 215.9h0M671.2 211.5h0M671.2 207.1h0M671.2 202.6h0M671.2 198.2h0M671.2 193.7h0M671.2 184.9h0M671.2 176.0h0M672.8 340.1h0M672.8 242.5h0M672.8 238.1h0M672.8 233.7h0M672.8 229.2h0M672.8 224.8h0M672.8 220.4h0M672.8 215.9h0M672.8 211.5h0M672.8 207.1h0M672.8 202.6h0M672.8 198.2h0M672.8 193.7h0M672.8 184.9h0M674.4 340.1h0M674.4 242.5h0M674.4 238.1h0M674.4 233.7h0M674.4 229.2h0M674.4 224.8h0M674.4 220.4h0M674.4 215.9h0M674.4 211.5h0M674.4 207.1h0M674.4 202.6h0M674.4 198.2h0M674.4 193.7h0M674.4 184.9h0M676.1 233.7h0M676.1 229.2h0M676.1 224.8h0M676.1 220.4h0M676.1 215.9h0M676.1 211.5h0M676.1 207.1h0M676.1 202.6h0M676.1 198.2h0M676.1 193.7h0M676.1 184.9h0M676.1 127.2h0M676.1 122.8h0M677.7 233.7h0M677.7 229.2h0M677.7 224.8h0M677.7 220.4h0M677.7 215.9h0M677.7 211.5h0M677.7 207.1h0M677.7 202.6h0M677.7 198.2h0M677.7 180.4h0M677.7 167.1h0M679.3 233.7h0M679.3 229.2h0M679.3 224.8h0M679.3 220.4h0M679.3 215.9h0M679.3 211.5h0M679.3 207.1h0M679.3 202.6h0M679.3 198.2h0M679.3 189.3h0M679.3 180.4h0M679.3 176.0h0M681.0 238.1h0M681.0 233.7h0M681.0 229.2h0M681.0 224.8h0M681.0 220.4h0M681.0 215.9h0M681.0 211.5h0M681.0 207.1h0M681.0 202.6h0M681.0 198.2h0M681.0 180.4h0M681.0 171.6h0M682.6 238.1h0M682.6 233.7h0M682.6 229.2h0M682.6 224.8h0M682.6 220.4h0M682.6 215.9h0M682.6 211.5h0M682.6 207.1h0M682.6 202.6h0M682.6 198.2h0M682.6 180.4h0M682.6 171.6h0M684.3 340.1h0M684.3 242.5h0M684.3 238.1h0M684.3 233.7h0M684.3 229.2h0M684.3 224.8h0M684.3 220.4h0M684.3 215.9h0M684.3 211.5h0M684.3 207.1h0M684.3 202.6h0M684.3 198.2h0M684.3 180.4h0M684.3 171.6h0M685.9 238.1h0M685.9 233.7h0M685.9 224.8h0M685.9 220.4h0M685.9 215.9h0M685.9 211.5h0M685.9 207.1h0M685.9 202.6h0M685.9 198.2h0M685.9 180.4h0M685.9 176.0h0M685.9 171.6h0M687.5 233.7h0M687.5 224.8h0M687.5 220.4h0M687.5 215.9h0M687.5 211.5h0M687.5 207.1h0M687.5 202.6h0M687.5 198.2h0M687.5 180.4h0M687.5 171.6h0M689.2 242.5h0M689.2 233.7h0M689.2 224.8h0M689.2 220.4h0M689.2 215.9h0M689.2 211.5h0M689.2 207.1h0M689.2 202.6h0M689.2 198.2h0M689.2 180.4h0M689.2 171.6h0M690.8 233.7h0M690.8 224.8h0M690.8 220.4h0M690.8 215.9h0M690.8 211.5h0M690.8 207.1h0M690.8 202.6h0M690.8 198.2h0M690.8 171.6h0M692.4 233.7h0M692.4 224.8h0M692.4 220.4h0M692.4 215.9h0M692.4 211.5h0M692.4 207.1h0M692.4 202.6h0M692.4 198.2h0M692.4 189.3h0M692.4 171.6h0M694.1 233.7h0M694.1 224.8h0M694.1 220.4h0M694.1 215.9h0M694.1 211.5h0M694.1 207.1h0M694.1 202.6h0M694.1 198.2h0M694.1 180.4h0M694.1 171.6h0M695.7 238.1h0M695.7 233.7h0M695.7 229.2h0M695.7 224.8h0M695.7 220.4h0M695.7 215.9h0M695.7 211.5h0M695.7 207.1h0M695.7 202.6h0M695.7 198.2h0M695.7 193.7h0M695.7 184.9h0M695.7 167.1h0M697.3 340.1h0M697.3 238.1h0M697.3 224.8h0M697.3 220.4h0M697.3 215.9h0M697.3 211.5h0M697.3 207.1h0M697.3 202.6h0M697.3 198.2h0M697.3 193.7h0M697.3 184.9h0M699.0 238.1h0M699.0 224.8h0M699.0 220.4h0M699.0 215.9h0M699.0 211.5h0M699.0 207.1h0M699.0 202.6h0M699.0 198.2h0M699.0 193.7h0M699.0 189.3h0M699.0 184.9h0M700.6 335.7h0M700.6 264.7h0M700.6 238.1h0M700.6 229.2h0M700.6 224.8h0M700.6 220.4h0M700.6 215.9h0M700.6 211.5h0M700.6 207.1h0M700.6 202.6h0M700.6 198.2h0M700.6 193.7h0M700.6 189.3h0M700.6 184.9h0M702.3 229.2h0M702.3 224.8h0M702.3 220.4h0M702.3 215.9h0M702.3 211.5h0M702.3 207.1h0M702.3 202.6h0M702.3 198.2h0M702.3 189.3h0M702.3 176.0h0M703.9 229.2h0M703.9 224.8h0M703.9 220.4h0M703.9 215.9h0M703.9 211.5h0M703.9 207.1h0M703.9 202.6h0M703.9 198.2h0M703.9 171.6h0M705.5 233.7h0M705.5 229.2h0M705.5 224.8h0M705.5 220.4h0M705.5 215.9h0M705.5 211.5h0M705.5 207.1h0M705.5 202.6h0M705.5 198.2h0M705.5 171.6h0M707.2 229.2h0M707.2 224.8h0M707.2 220.4h0M707.2 215.9h0M707.2 211.5h0M707.2 207.1h0M707.2 202.6h0M707.2 198.2h0M707.2 193.7h0M707.2 184.9h0M707.2 171.6h0M708.8 340.1h0M708.8 224.8h0M708.8 220.4h0M708.8 215.9h0M708.8 211.5h0M708.8 207.1h0M708.8 202.6h0M708.8 198.2h0M708.8 193.7h0M708.8 189.3h0M708.8 184.9h0M708.8 176.0h0M708.8 171.6h0M710.4 224.8h0M710.4 220.4h0M710.4 215.9h0M710.4 211.5h0M710.4 207.1h0M710.4 202.6h0M710.4 198.2h0M710.4 193.7h0M710.4 189.3h0M710.4 184.9h0M710.4 176.0h0M710.4 171.6h0M712.1 224.8h0M712.1 220.4h0M712.1 215.9h0M712.1 211.5h0M712.1 207.1h0M712.1 202.6h0M712.1 198.2h0M712.1 193.7h0M712.1 189.3h0M712.1 184.9h0M712.1 180.4h0M712.1 176.0h0M712.1 171.6h0M713.7 224.8h0M713.7 220.4h0M713.7 215.9h0M713.7 211.5h0M713.7 207.1h0M713.7 202.6h0M713.7 198.2h0M713.7 193.7h0M713.7 189.3h0M713.7 184.9h0M713.7 176.0h0M713.7 171.6h0M715.3 224.8h0M715.3 220.4h0M715.3 215.9h0M715.3 211.5h0M715.3 207.1h0M715.3 202.6h0M715.3 198.2h0M715.3 193.7h0M715.3 189.3h0M715.3 184.9h0M715.3 176.0h0M717.0 251.4h0M717.0 238.1h0M717.0 224.8h0M717.0 220.4h0M717.0 215.9h0M717.0 211.5h0M717.0 207.1h0M717.0 202.6h0M717.0 198.2h0M717.0 193.7h0M717.0 189.3h0M717.0 184.9h0M717.0 180.4h0M717.0 127.2h0M717.0 122.8h0M718.6 229.2h0M718.6 224.8h0M718.6 220.4h0M718.6 215.9h0M718.6 211.5h0M718.6 207.1h0M718.6 202.6h0M718.6 198.2h0M718.6 193.7h0M718.6 189.3h0M718.6 184.9h0M718.6 180.4h0M718.6 171.6h0M720.3 224.8h0M720.3 220.4h0M720.3 215.9h0M720.3 211.5h0M720.3 207.1h0M720.3 202.6h0M720.3 198.2h0M720.3 193.7h0M720.3 189.3h0M720.3 180.4h0M721.9 224.8h0M721.9 220.4h0M721.9 215.9h0M721.9 211.5h0M721.9 207.1h0M721.9 202.6h0M721.9 198.2h0M721.9 193.7h0M721.9 189.3h0M721.9 184.9h0M721.9 180.4h0M723.5 340.1h0M723.5 224.8h0M723.5 220.4h0M723.5 215.9h0M723.5 211.5h0M723.5 207.1h0M723.5 202.6h0M723.5 198.2h0M723.5 193.7h0M723.5 189.3h0M723.5 180.4h0M725.2 229.2h0M725.2 224.8h0M725.2 220.4h0M725.2 215.9h0M725.2 211.5h0M725.2 207.1h0M725.2 202.6h0M725.2 198.2h0M725.2 193.7h0M725.2 189.3h0M725.2 180.4h0M725.2 171.6h0M726.8 229.2h0M726.8 224.8h0M726.8 220.4h0M726.8 215.9h0M726.8 211.5h0M726.8 207.1h0M726.8 202.6h0M726.8 198.2h0M726.8 193.7h0M726.8 189.3h0M726.8 180.4h0M728.4 229.2h0M728.4 224.8h0M728.4 220.4h0M728.4 215.9h0M728.4 211.5h0M728.4 207.1h0M728.4 202.6h0M728.4 198.2h0M728.4 193.7h0M728.4 189.3h0M728.4 184.9h0M728.4 180.4h0M730.1 340.1h0M730.1 300.2h0M730.1 229.2h0M730.1 224.8h0M730.1 220.4h0M730.1 215.9h0M730.1 211.5h0M730.1 207.1h0M730.1 202.6h0M730.1 198.2h0M730.1 193.7h0M730.1 189.3h0M730.1 184.9h0M731.7 224.8h0M731.7 220.4h0M731.7 215.9h0M731.7 211.5h0M731.7 207.1h0M731.7 202.6h0M731.7 198.2h0M731.7 193.7h0M731.7 189.3h0M731.7 184.9h0M731.7 176.0h0M733.3 238.1h0M733.3 224.8h0M733.3 220.4h0M733.3 215.9h0M733.3 211.5h0M733.3 207.1h0M733.3 202.6h0M733.3 198.2h0M733.3 193.7h0M733.3 189.3h0M733.3 184.9h0M733.3 171.6h0M735.0 340.1h0M735.0 224.8h0M735.0 220.4h0M735.0 215.9h0M735.0 211.5h0M735.0 207.1h0M735.0 202.6h0M735.0 198.2h0M735.0 193.7h0M735.0 189.3h0M735.0 184.9h0M735.0 180.4h0M736.6 340.1h0M736.6 233.7h0M736.6 224.8h0M736.6 220.4h0M736.6 215.9h0M736.6 211.5h0M736.6 207.1h0M736.6 202.6h0M736.6 198.2h0M736.6 193.7h0M736.6 189.3h0M736.6 184.9h0M736.6 176.0h0M738.3 224.8h0M738.3 220.4h0M738.3 215.9h0M738.3 211.5h0M738.3 207.1h0M738.3 202.6h0M738.3 198.2h0M738.3 193.7h0M738.3 189.3h0M738.3 184.9h0M738.3 176.0h0M739.9 233.7h0M739.9 224.8h0M739.9 220.4h0M739.9 215.9h0M739.9 211.5h0M739.9 207.1h0M739.9 202.6h0M739.9 198.2h0M739.9 193.7h0M739.9 189.3h0M739.9 180.4h0M741.5 224.8h0M741.5 220.4h0M741.5 215.9h0M741.5 211.5h0M741.5 207.1h0M741.5 202.6h0M741.5 198.2h0M741.5 193.7h0M741.5 189.3h0M743.2 340.1h0M743.2 229.2h0M743.2 224.8h0M743.2 220.4h0M743.2 215.9h0M743.2 211.5h0M743.2 207.1h0M743.2 202.6h0M743.2 198.2h0M743.2 193.7h0M743.2 189.3h0M743.2 184.9h0M744.8 229.2h0M744.8 224.8h0M744.8 220.4h0M744.8 215.9h0M744.8 211.5h0M744.8 207.1h0M744.8 202.6h0M744.8 193.7h0M744.8 184.9h0M746.4 229.2h0M746.4 224.8h0M746.4 220.4h0M746.4 215.9h0M746.4 211.5h0M746.4 207.1h0M746.4 202.6h0M746.4 193.7h0M746.4 184.9h0M748.1 224.8h0M748.1 220.4h0M748.1 215.9h0M748.1 211.5h0M748.1 207.1h0M748.1 202.6h0M748.1 193.7h0M749.7 340.1h0M749.7 224.8h0M749.7 220.4h0M749.7 215.9h0M749.7 211.5h0M749.7 207.1h0M749.7 202.6h0M749.7 198.2h0M751.3 340.1h0M751.3 224.8h0M751.3 220.4h0M751.3 215.9h0M751.3 211.5h0M751.3 207.1h0M751.3 202.6h0M751.3 198.2h0M751.3 189.3h0M751.3 180.4h0M753.0 224.8h0M753.0 220.4h0M753.0 215.9h0M753.0 211.5h0M753.0 207.1h0M753.0 202.6h0M753.0 198.2h0M753.0 189.3h0M754.6 224.8h0M754.6 220.4h0M754.6 215.9h0M754.6 211.5h0M754.6 207.1h0M754.6 202.6h0M754.6 198.2h0M754.6 189.3h0M756.3 238.1h0M756.3 224.8h0M756.3 220.4h0M756.3 215.9h0M756.3 211.5h0M756.3 207.1h0M756.3 202.6h0M756.3 198.2h0M756.3 189.3h0M756.3 184.9h0M757.9 224.8h0M757.9 220.4h0M757.9 215.9h0M757.9 211.5h0M757.9 207.1h0M757.9 202.6h0M757.9 122.8h0M757.9 118.4h0M759.5 340.1h0M759.5 220.4h0M759.5 215.9h0M759.5 211.5h0M759.5 207.1h0M759.5 202.6h0M761.2 340.1h0M761.2 220.4h0M761.2 215.9h0M761.2 211.5h0M761.2 207.1h0M761.2 202.6h0M761.2 198.2h0M762.8 340.1h0M762.8 224.8h0M762.8 220.4h0M762.8 215.9h0M762.8 211.5h0M762.8 207.1h0M762.8 202.6h0M762.8 198.2h0M762.8 189.3h0M764.4 340.1h0M764.4 220.4h0M764.4 215.9h0M764.4 211.5h0M764.4 207.1h0M764.4 202.6h0M764.4 198.2h0M764.4 189.3h0M766.1 340.1h0M766.1 220.4h0M766.1 215.9h0M766.1 211.5h0M766.1 207.1h0M766.1 202.6h0M766.1 198.2h0M766.1 193.7h0M767.7 340.1h0M767.7 273.6h0M767.7 260.3h0M767.7 247.0h0M767.7 224.8h0M767.7 220.4h0M767.7 215.9h0M767.7 211.5h0M767.7 207.1h0M767.7 202.6h0M767.7 198.2h0M769.3 340.1h0M769.3 220.4h0M769.3 215.9h0M769.3 211.5h0M769.3 207.1h0M769.3 202.6h0M769.3 198.2h0M771.0 340.1h0M771.0 220.4h0M771.0 215.9h0M771.0 211.5h0M771.0 207.1h0M771.0 202.6h0M771.0 198.2h0M772.6 340.1h0M772.6 220.4h0M772.6 215.9h0M772.6 211.5h0M772.6 207.1h0M772.6 202.6h0M774.3 340.1h0M774.3 220.4h0M774.3 215.9h0M774.3 211.5h0M774.3 207.1h0M774.3 202.6h0M775.9 340.1h0M775.9 220.4h0M775.9 215.9h0M775.9 211.5h0M775.9 207.1h0M775.9 202.6h0M775.9 193.7h0M777.5 340.1h0M777.5 220.4h0M777.5 215.9h0M777.5 211.5h0M777.5 207.1h0M777.5 202.6h0M777.5 193.7h0M779.2 340.1h0M779.2 304.6h0M779.2 220.4h0M779.2 215.9h0M779.2 211.5h0M779.2 207.1h0M779.2 202.6h0M779.2 198.2h0M779.2 193.7h0M780.8 340.1h0M780.8 229.2h0M780.8 220.4h0M780.8 215.9h0M780.8 211.5h0M780.8 207.1h0M780.8 202.6h0M782.4 340.1h0M782.4 220.4h0M782.4 215.9h0M782.4 211.5h0M782.4 207.1h0M782.4 202.6h0M784.1 340.1h0M784.1 220.4h0M784.1 215.9h0M784.1 211.5h0M784.1 207.1h0M784.1 202.6h0M784.1 184.9h0M785.7 340.1h0M785.7 220.4h0M785.7 215.9h0M785.7 211.5h0M785.7 207.1h0M785.7 202.6h0M785.7 198.2h0M787.4 340.1h0M787.4 242.5h0M787.4 220.4h0M787.4 215.9h0M787.4 211.5h0M787.4 207.1h0M787.4 202.6h0M787.4 198.2h0M789.0 340.1h0M789.0 220.4h0M789.0 215.9h0M789.0 211.5h0M789.0 207.1h0M789.0 202.6h0M789.0 198.2h0M789.0 193.7h0M790.6 340.1h0M790.6 220.4h0M790.6 215.9h0M790.6 211.5h0M790.6 207.1h0M790.6 202.6h0M790.6 198.2h0M792.3 340.1h0M792.3 335.7h0M792.3 260.3h0M792.3 220.4h0M792.3 215.9h0M792.3 211.5h0M792.3 207.1h0M792.3 202.6h0M793.9 340.1h0M793.9 224.8h0M793.9 220.4h0M793.9 215.9h0M793.9 211.5h0M793.9 207.1h0M793.9 202.6h0M795.5 340.1h0M795.5 224.8h0M795.5 220.4h0M795.5 215.9h0M795.5 211.5h0M795.5 207.1h0M795.5 202.6h0M795.5 131.7h0M795.5 118.4h0M797.2 220.4h0M797.2 215.9h0M797.2 211.5h0M797.2 207.1h0M797.2 202.6h0M798.8 220.4h0M798.8 215.9h0M798.8 211.5h0M798.8 207.1h0M798.8 202.6h0M798.8 158.3h0M798.8 122.8h0M800.4 242.5h0M800.4 220.4h0M800.4 215.9h0M800.4 211.5h0M800.4 207.1h0M800.4 202.6h0M802.1 340.1h0M802.1 220.4h0M802.1 215.9h0M802.1 211.5h0M802.1 207.1h0M802.1 202.6h0M803.7 340.1h0M803.7 220.4h0M803.7 215.9h0M803.7 211.5h0M803.7 207.1h0M803.7 202.6h0M803.7 198.2h0M803.7 184.9h0M805.4 340.1h0M805.4 278.0h0M805.4 224.8h0M805.4 220.4h0M805.4 215.9h0M805.4 211.5h0M805.4 207.1h0M805.4 202.6h0M805.4 198.2h0M805.4 193.7h0M807.0 340.1h0M807.0 286.9h0M807.0 255.8h0M807.0 242.5h0M807.0 229.2h0M807.0 224.8h0M807.0 220.4h0M807.0 215.9h0M807.0 211.5h0M807.0 207.1h0M807.0 202.6h0M807.0 198.2h0M807.0 189.3h0M808.6 340.1h0M808.6 229.2h0M808.6 224.8h0M808.6 220.4h0M808.6 215.9h0M808.6 211.5h0M808.6 207.1h0M808.6 202.6h0M810.3 340.1h0M810.3 317.9h0M810.3 233.7h0M810.3 224.8h0M810.3 220.4h0M810.3 215.9h0M810.3 211.5h0M810.3 207.1h0M810.3 202.6h0M811.9 340.1h0M811.9 273.6h0M811.9 220.4h0M811.9 215.9h0M811.9 211.5h0M811.9 207.1h0M811.9 202.6h0M813.5 340.1h0M813.5 238.1h0M813.5 215.9h0M813.5 211.5h0M813.5 207.1h0M813.5 202.6h0M815.2 340.1h0M815.2 215.9h0M815.2 211.5h0M815.2 207.1h0M815.2 202.6h0M816.8 340.1h0M816.8 220.4h0M816.8 215.9h0M816.8 211.5h0M816.8 207.1h0M816.8 202.6h0M816.8 198.2h0M818.4 340.1h0M818.4 224.8h0M818.4 220.4h0M818.4 215.9h0M818.4 211.5h0M818.4 207.1h0M818.4 202.6h0M818.4 198.2h0M818.4 189.3h0M820.1 340.1h0M820.1 322.4h0M820.1 264.7h0M820.1 229.2h0M820.1 224.8h0M820.1 220.4h0M820.1 215.9h0M820.1 211.5h0M820.1 207.1h0M820.1 202.6h0M820.1 198.2h0M820.1 193.7h0M821.7 224.8h0M821.7 220.4h0M821.7 215.9h0M821.7 211.5h0M821.7 207.1h0M821.7 202.6h0M821.7 198.2h0M823.4 233.7h0M823.4 224.8h0M823.4 220.4h0M823.4 215.9h0M823.4 211.5h0M823.4 207.1h0M823.4 202.6h0M825.0 340.1h0M825.0 242.5h0M825.0 224.8h0M825.0 220.4h0M825.0 215.9h0M825.0 211.5h0M825.0 207.1h0M825.0 202.6h0M826.6 340.1h0M826.6 247.0h0M826.6 220.4h0M826.6 215.9h0M826.6 211.5h0M826.6 207.1h0M826.6 202.6h0M828.3 340.1h0M828.3 229.2h0M828.3 220.4h0M828.3 215.9h0M828.3 211.5h0M828.3 207.1h0M828.3 202.6h0M828.3 198.2h0M829.9 340.1h0M829.9 207.1h0M829.9 202.6h0M829.9 198.2h0M829.9 193.7h0M829.9 189.3h0M829.9 184.9h0M829.9 180.4h0M829.9 176.0h0M831.5 340.1h0M831.5 207.1h0M831.5 193.7h0M831.5 189.3h0M831.5 184.9h0M831.5 180.4h0M831.5 176.0h0M833.2 340.1h0M833.2 171.6h0" stroke="#000" stroke-width="5.3" stroke-linecap="round" fill="none"/>
</svg>
<svg style="left:675px;top:606px" width="13" height="20" viewBox="0 0 13 20"><path d="M0.5 0.5V16.5L4.2 13 6.8 19 9 18 6.4 12.2H11.5z" fill="#fff" stroke="#10101c" stroke-width="1.200" stroke-linejoin="round"/></svg>
</body></html>
